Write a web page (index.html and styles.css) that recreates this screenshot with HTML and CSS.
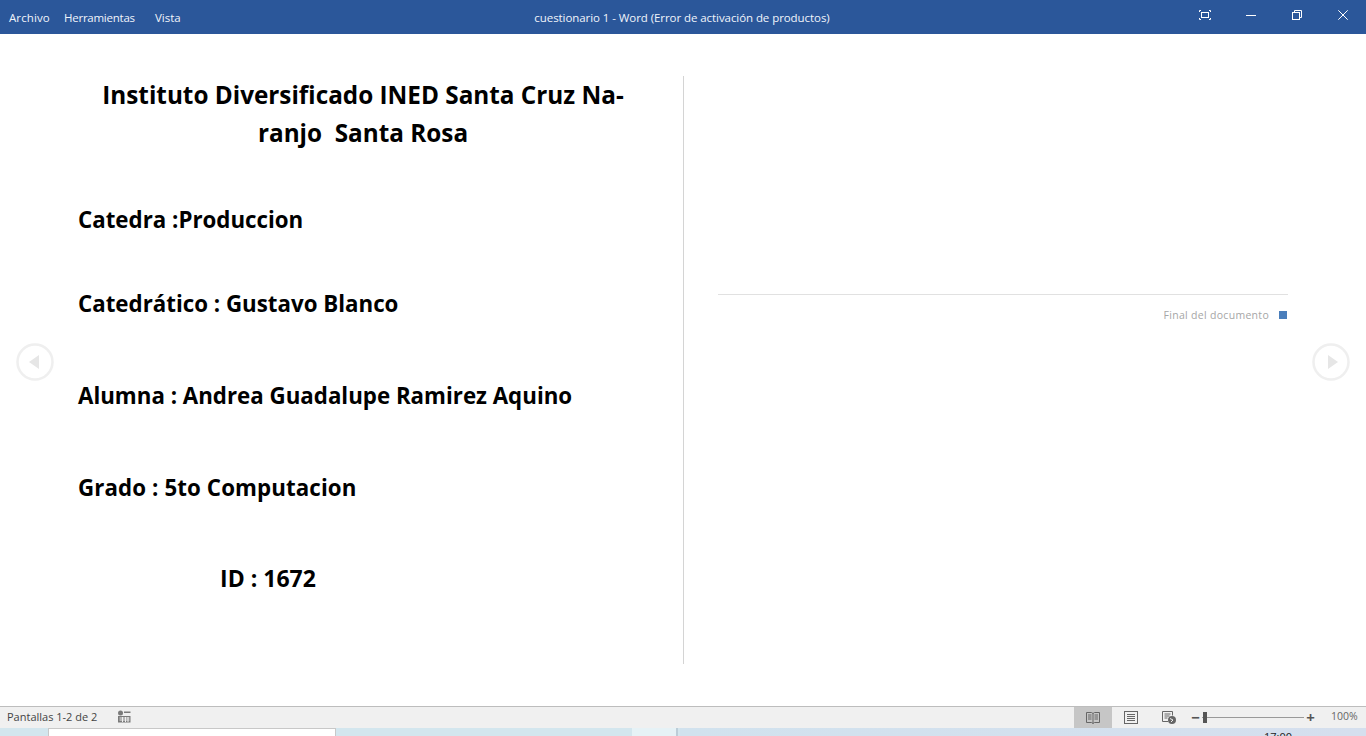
FILE: index.html
```html
<!DOCTYPE html>
<html lang="es">

<head>
  <meta charset="UTF-8">
  <title>cuestionario 1 - Word</title>
  <link rel="stylesheet" href="styles.css">
</head>

<body>
  <header class="titlebar">
    <nav class="menu">
      <span class="menu-archivo">Archivo</span>
      <span class="menu-herramientas">Herramientas</span>
      <span class="menu-vista">Vista</span>
    </nav>
    <div class="doc-title">cuestionario 1 - Word (Error de activación de productos)</div>
    <div class="window-buttons">
      <svg class="win-full" width="12" height="10" viewBox="0 0 12 10" fill="none" stroke="#fff">
        <path d="M.5 2V.5H2M10 .5h1.500V2M11.500 8v1.500H10M2 9.500H.5V8" />
        <rect x="2.500" y="2.500" width="7" height="5" />
      </svg>
      <svg width="10" height="10" viewBox="0 0 10 10" fill="none" stroke="#fff">
        <path d="M0 5.500h10" />
      </svg>
      <svg width="10" height="10" viewBox="0 0 10 10" fill="none" stroke="#fff">
        <rect x=".5" y="2.500" width="7" height="7" />
        <path d="M2.500 2.500V.5h7v7h-2" />
      </svg>
      <svg width="10" height="10" viewBox="0 0 10 10" fill="none" stroke="#fff">
        <path d="M.3.3l9.400 9.400M9.700.3L.3 9.700" />
      </svg>
    </div>
  </header>

  <main class="reader">
    <button class="nav-arrow nav-prev">
      <svg width="38" height="38" viewBox="0 0 38 38">
        <circle cx="19" cy="19" r="17.500" fill="#fff" stroke="#efefef" stroke-width="2.500" />
        <path d="M23 12v14l-10-7z" fill="#e6e6e6" />
      </svg>
    </button>

    <section class="page page-left">
      <h1 class="title">Instituto Diversificado INED Santa Cruz Na-<br>ranjo&nbsp; Santa Rosa</h1>
      <p class="line line-catedra">Catedra :Produccion</p>
      <p class="line line-catedratico">Catedrático : Gustavo Blanco</p>
      <p class="line line-alumna">Alumna : Andrea Guadalupe Ramirez Aquino</p>
      <p class="line line-grado">Grado : 5to Computacion</p>
      <p class="line line-id">ID : 1672</p>
    </section>

    <section class="page page-right">
      <div class="doc-end">
        <span>Final del documento</span>
        <i class="end-mark"></i>
      </div>
    </section>

    <button class="nav-arrow nav-next">
      <svg width="38" height="38" viewBox="0 0 38 38">
        <circle cx="19" cy="19" r="17.500" fill="#fff" stroke="#efefef" stroke-width="2.500" />
        <path d="M16 12v14l10-7z" fill="#e6e6e6" />
      </svg>
    </button>
  </main>

  <footer class="statusbar">
    <div class="status-left">
      <span class="page-count">Pantallas 1-2 de 2</span>
      <svg width="14" height="13" viewBox="0 0 14 13">
        <circle cx="3.500" cy="3" r="2.500" fill="#7a7a7a" />
        <path d="M7 1.500h6.500v1.500H7zM1 6h12.500v6.500H1z" fill="#7a7a7a" />
        <path d="M2.500 7.500h10v1h-10zM2.500 9.500h10v1h-10z" fill="#f0f0f0" />
        <path d="M5 7h1v5H5zM8 7h1v5H8zM10.500 7h1v5h-1z" fill="#f0f0f0" />
      </svg>
    </div>
    <div class="status-right">
      <div class="view-btn view-active">
        <svg width="14" height="13" viewBox="0 0 14 13" fill="none" stroke="#666">
          <path d="M.5 1.500h5l1.500 1 1.500-1h5v10h-5L7 12.500l-1.500-1h-5zM7 2.500v10" />
          <path d="M2 4h3.500M2 6h3.500M2 8h3.500M8.500 4H12M8.500 6H12M8.500 8H12" />
        </svg>
      </div>
      <div class="view-btn">
        <svg width="14" height="13" viewBox="0 0 14 13" fill="none" stroke="#666">
          <rect x=".5" y=".5" width="13" height="12" />
          <path d="M3 3.500h8M3 5.500h8M3 7.500h8M3 9.500h8" />
        </svg>
      </div>
      <div class="view-btn">
        <svg width="14" height="13" viewBox="0 0 14 13" fill="none">
          <path d="M6 10.500H.5V.5h10v4" stroke="#666" />
          <path d="M2.500 3h6M2.500 5h5M2.500 7h3" stroke="#666" />
          <circle cx="10" cy="9" r="4" fill="#666" />
          <path d="M8 7.500l3 1.500-2 2" stroke="#f0f0f0" />
        </svg>
      </div>
      <div class="zoom">
        <span class="zoom-sign">−</span>
        <div class="zoom-track"><i class="zoom-thumb"></i></div>
        <span class="zoom-sign">+</span>
      </div>
      <span class="zoom-pct">100%</span>
    </div>
  </footer>

  <div class="desktop">
    <div class="desk-a"></div>
    <div class="desk-window"></div>
    <div class="desk-b"></div>
    <div class="desk-light"></div>
    <div class="desk-sep"></div>
    <div class="desk-c">
      <span class="desk-clock">17:00</span>
    </div>
  </div>
</body>

</html>
```

FILE: styles.css
```css
html,
body {
  margin: 0;
  height: 736px;
  overflow: hidden;
}

body {
  display: flex;
  flex-direction: column;
  background-color: #fff;
  font-family: "Open Sans", sans-serif;
}

.titlebar {
  display: flex;
  align-items: center;
  height: 34px;
  position: relative;
  background-color: #2b579a;
  color: #fff;
  font-size: 11.500px;
}

.menu {
  display: flex;
  color: #f0f4fa;
}

.menu-archivo {
  margin-left: 9px;
  width: 55px;
  letter-spacing: 0.1px;
}

.menu-herramientas {
  width: 91px;
  letter-spacing: -0.25px;
}

.doc-title {
  position: absolute;
  left: 0;
  right: 0;
  text-align: center;
  color: #f0f4fa;
  letter-spacing: -0.07px;
  transform: translateX(-1px);
}

.window-buttons {
  display: flex;
  align-items: center;
  margin-left: auto;
  margin-right: 18px;
  padding-bottom: 4px;
  gap: 36px;
}

.window-buttons svg {
  display: block;
}

.win-full {
  margin-right: -1px;
}

.reader {
  flex: 1;
  display: flex;
  position: relative;
}

.nav-arrow {
  position: absolute;
  top: 309px;
  padding: 0;
  border: none;
  background: none;
  width: 38px;
  height: 38px;
}

.nav-prev {
  left: 16px;
}

.nav-next {
  right: 16px;
}

.page {
  margin-top: 42px;
  height: 588px;
  box-sizing: border-box;
}

.page-left {
  width: 684px;
  padding-left: 78px;
  border-right: 1px solid #d4d4d4;
  color: #000;
  font-weight: 700;
  font-size: 22.300px;
}

.title {
  width: 570px;
  margin: 0;
  font-size: 24.300px;
  font-weight: 700;
  line-height: 38px;
  text-align: center;
  white-space: nowrap;
}

.line {
  margin: 0;
  line-height: 32px;
}

.line-catedra {
  margin-top: 52px;
}

.line-catedratico {
  margin-top: 52px;
}

.line-alumna,
.line-grado {
  margin-top: 60px;
}

.line-grado {
  letter-spacing: 0.1px;
}

.line-id {
  width: 380px;
  margin-top: 58px;
  font-size: 23px;
  text-align: center;
}

.page-right {
  width: 604px;
  margin-left: 34px;
}

.doc-end {
  display: flex;
  justify-content: flex-end;
  align-items: center;
  gap: 10px;
  margin-top: 218px;
  width: 570px;
  height: 41px;
  box-sizing: border-box;
  border-top: 1px solid #e1e1e1;
  font-size: 10.500px;
  letter-spacing: 0.3px;
  color: #a6a6a6;
}

.end-mark {
  width: 8px;
  height: 8px;
  margin-right: 1px;
  background-color: #4a7ebb;
}

.statusbar {
  display: flex;
  justify-content: space-between;
  height: 21px;
  border-top: 1px solid #bdbdbd;
  background-color: #f0f0f0;
  color: #444;
  font-size: 11px;
  line-height: 19px;
}

.status-left {
  display: flex;
  align-items: center;
  padding-left: 7px;
  padding-bottom: 2px;
  gap: 19px;
}

.page-count {
  width: 91px;
  white-space: nowrap;
}

.status-right {
  display: flex;
  align-items: center;
}

.view-btn {
  display: flex;
  align-items: center;
  justify-content: center;
  width: 38px;
  height: 21px;
}

.view-active {
  background-color: #c6c6c6;
}

.zoom {
  display: flex;
  align-items: center;
  width: 124px;
  margin-left: 3px;
  color: #555;
}

.zoom-sign {
  width: 9px;
  text-align: center;
  font-size: 15px;
  font-weight: 700;
  line-height: 21px;
}

.zoom-track {
  flex: 1;
  height: 1px;
  margin: 0 2px;
  position: relative;
  background-color: #999;
}

.zoom-thumb {
  position: absolute;
  left: 1px;
  top: -5px;
  width: 4px;
  height: 11px;
  background-color: #555;
}

.zoom-pct {
  width: 35px;
  margin-left: 16px;
  padding-bottom: 2px;
  font-size: 10.500px;
  color: #666;
  white-space: nowrap;
}

.desktop {
  display: flex;
  height: 8px;
  overflow: hidden;
  background-color: #d3e6ee;
}

.desk-a {
  width: 48px;
}

.desk-window {
  width: 286px;
  background-color: #fff;
  border: 1px solid #c8c8c8;
  border-bottom: none;
}

.desk-b {
  width: 296px;
}

.desk-light {
  width: 44px;
  background-color: #e6f2f6;
}

.desk-sep {
  width: 2px;
  background-color: #bccdd8;
  margin-right: 2px;
}

.desk-c {
  flex: 1;
  position: relative;
  background: linear-gradient(90deg, #d1e2ee, #d5dfee);
}

.desk-clock {
  position: absolute;
  left: 584px;
  top: 3px;
  font-size: 11px;
  color: #222;
  line-height: 11px;
}
```
